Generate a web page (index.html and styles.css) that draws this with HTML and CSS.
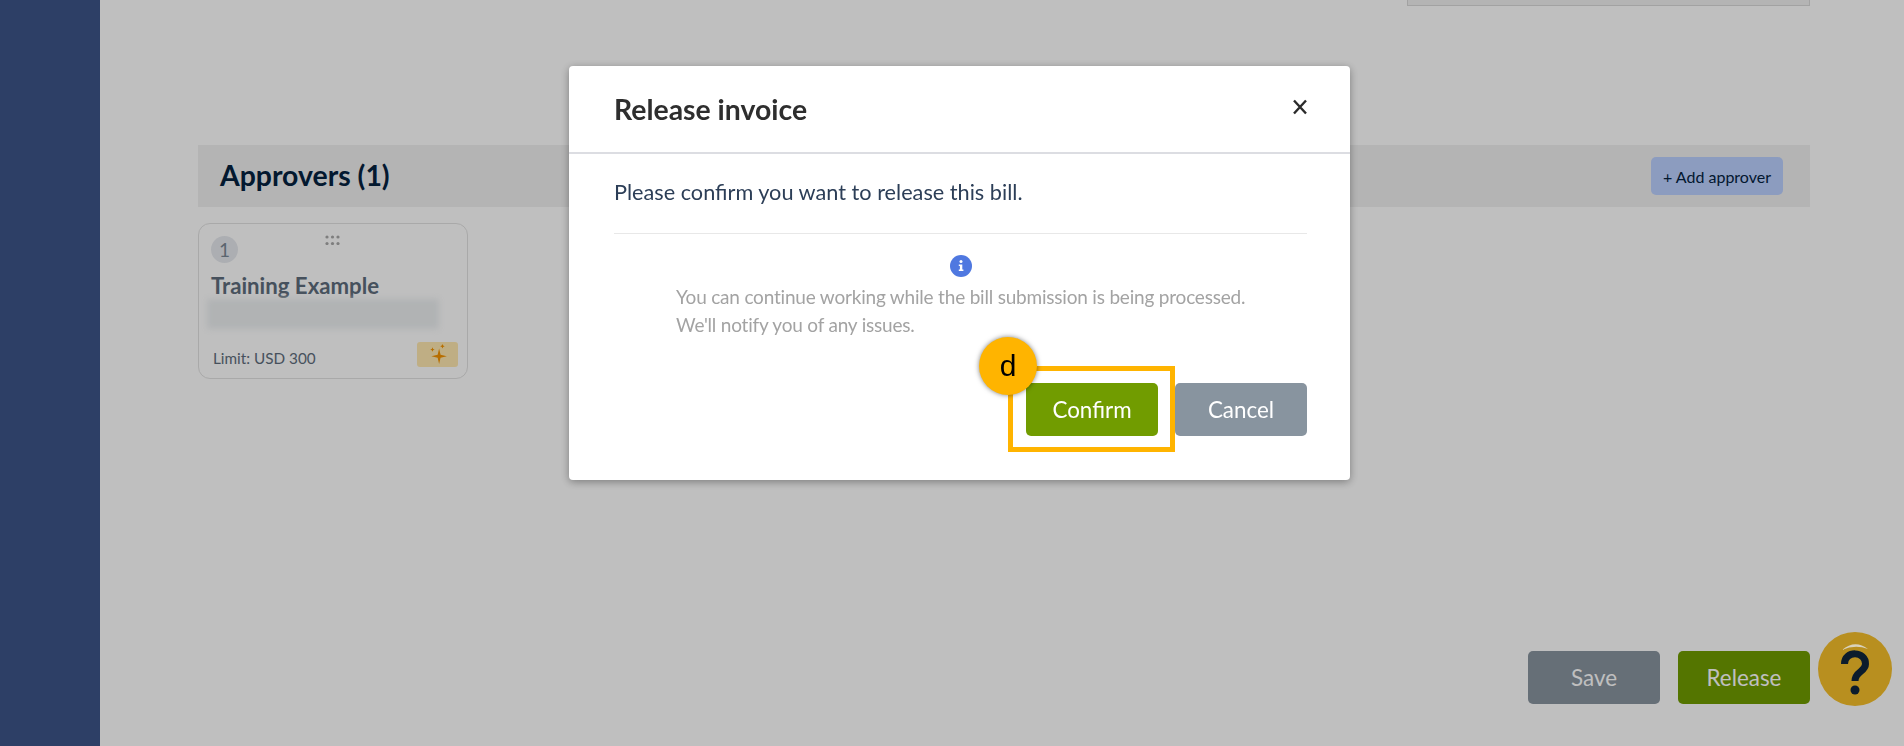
FILE: index.html
```html
<!DOCTYPE html>
<html lang="en">
<head>
  <meta charset="UTF-8">
  <title>Release invoice</title>
  <link rel="stylesheet" href="styles.css">
</head>
<body>
  <div class="page">
    <div class="sidebar"></div>
    <div class="main">
      <div class="top-box"></div>

      <div class="section-bar">
        <h2>Approvers (1)</h2>
        <button class="add-btn">+ Add approver</button>
      </div>

      <div class="card">
        <div class="card-top">
          <span class="step">1</span>
          <svg class="grip" width="15" height="10" viewBox="0 0 15 10">
            <g fill="#a9a9a9">
              <circle cx="2" cy="2" r="1.6"/><circle cx="7.500" cy="2" r="1.6"/><circle cx="13" cy="2" r="1.6"/>
              <circle cx="2" cy="8.500" r="1.6"/><circle cx="7.500" cy="8.500" r="1.6"/><circle cx="13" cy="8.500" r="1.6"/>
            </g>
          </svg>
        </div>
        <div class="card-name">Training Example</div>
        <div class="card-blur"></div>
        <div class="card-foot">
          <span class="limit">Limit: USD 300</span>
          <span class="badge">
            <svg width="20" height="20" viewBox="0 0 18 18">
              <g fill="#f59300">
                <path d="M10 4 L11.300 9.700 L17 11 L11.300 12.300 L10 18 L8.700 12.300 L3 11 L8.700 9.700Z"/>
                <path d="M4 3 L4.600 4.400 L6 5 L4.600 5.600 L4 7 L3.400 5.600 L2 5 L3.400 4.400Z"/>
                <path d="M13 0 L13.600 1.400 L15 2 L13.600 2.600 L13 4 L12.400 2.600 L11 2 L12.400 1.400Z"/>
              </g>
            </svg>
          </span>
        </div>
      </div>

      <div class="footer">
        <button class="btn btn-grey">Save</button>
        <button class="btn btn-green">Release</button>
      </div>
    </div>
  </div>

  <div class="backdrop"></div>

  <div class="modal">
    <div class="modal-head">
      <h3>Release invoice</h3>
      <svg class="close" width="16" height="16" viewBox="0 0 16 16">
        <path d="M2 1.500 L14 14.500 M14 1.500 L2 14.500" stroke="#2b2b2b" stroke-width="2.400" fill="none"/>
      </svg>
    </div>
    <div class="modal-body">
      <p class="confirm-text">Please confirm you want to release this bill.</p>
      <div class="notice">
        <span class="info-icon">
          <svg width="22" height="22" viewBox="0 0 22 22">
            <circle cx="11" cy="11" r="11" fill="#4f78e0"/>
            <circle cx="11" cy="6.500" r="1.500" fill="#fff"/>
            <path d="M8.800 9.500 H12.300 V14.500 H13.400 V16 H8.800 V14.500 H9.900 V11 H8.800Z" fill="#fff"/>
          </svg>
        </span>
        <p>You can continue working while the bill submission is being processed.<br>We'll notify you of any issues.</p>
      </div>
      <div class="modal-actions">
        <button class="btn btn-green">Confirm</button>
        <button class="btn btn-grey">Cancel</button>
      </div>
    </div>
  </div>

  <div class="callout-box"></div>
  <div class="callout-dot">d</div>

  <div class="help">
    <svg width="74" height="74" viewBox="0 0 74 74">
      <circle cx="37" cy="37" r="37" fill="#b88f1f"/>
      <path d="M24 18 Q37 7 50 17 Q37 12 24 18Z" fill="#d9d2bd"/>
      <path d="M26.500 32 C26.500 18 48 19 47.500 32 C47.500 40 37 39 37 49" fill="none" stroke="#0b1c2c" stroke-width="7"/>
      <circle cx="37" cy="58" r="4.500" fill="#0b1c2c"/>
    </svg>
  </div>
</body>
</html>
```

FILE: styles.css
```css
* {
  box-sizing: border-box;
}
html, body {
  margin: 0;
  height: 100%;
  overflow: hidden;
}
body {
  font-family: Lato, "Open Sans", sans-serif;
  background-color: #fff;
  color: #2f3b4a;
}
button {
  font-family: inherit;
  border: none;
}

.page {
  display: flex;
  height: 746px;
}
.sidebar {
  width: 100px;
  background-color: #3d5588;
}
.main {
  flex: 1;
  display: flex;
  flex-direction: column;
  padding: 0 94px 42px 98px;
}
.top-box {
  height: 6px;
  margin-left: 1209px;
  background-color: #f0f0f0;
  border: 1px solid #d8d8d8;
  border-top: none;
}

.section-bar {
  margin-top: 139px;
  height: 62px;
  display: flex;
  align-items: center;
  justify-content: space-between;
  padding: 0 27px 2px 22px;
  background-color: #f1f1f1;
}
.section-bar h2 {
  margin: 0;
  font-size: 28.400px;
  font-weight: 700;
  color: #04223f;
}
.add-btn {
  width: 132px;
  height: 38px;
  margin-top: 2px;
  background-color: #bbd0ff;
  border-radius: 5px;
  font-size: 16px;
  color: #04223f;
}

.card {
  margin-top: 16px;
  width: 270px;
  height: 156px;
  border: 1px solid #e2e2e2;
  border-radius: 12px;
  padding: 12px 9px 0 12px;
}
.card-top {
  display: flex;
  align-items: flex-start;
}
.step {
  width: 27px;
  height: 27px;
  border-radius: 50%;
  background-color: #e6e9ee;
  color: #7a8794;
  font-size: 19px;
  display: flex;
  align-items: center;
  justify-content: center;
}
.grip {
  margin: -1px 0 0 87px;
}
.card-name {
  margin-top: 9px;
  font-size: 22.200px;
  font-weight: 700;
  line-height: 27px;
  color: #5e6d7c;
}
.card-blur {
  margin: 0 19px 0 -4px;
  height: 30px;
  background-color: #eceff1;
  filter: blur(3px);
}
.card-foot {
  margin-top: 12px;
  display: flex;
  align-items: center;
  justify-content: space-between;
}
.limit {
  padding: 8px 0 0 2px;
  font-size: 15.300px;
  color: #5e6d7c;
}
.badge {
  width: 41px;
  height: 25px;
  background-color: #ffe9b0;
  border-radius: 3px;
  display: flex;
  align-items: center;
  justify-content: center;
}

.footer {
  margin-top: auto;
  display: flex;
  justify-content: flex-end;
  gap: 18px;
}
.btn {
  width: 132px;
  height: 53px;
  border-radius: 5px;
  color: #fff;
  font-size: 22.400px;
}
.btn-green {
  background-color: #719c00;
}
.btn-grey {
  background-color: #88949f;
}

.backdrop {
  position: fixed;
  inset: 0;
  background-color: rgba(0, 0, 0, 0.25);
}

.modal {
  position: fixed;
  left: 569px;
  top: 66px;
  width: 781px;
  height: 414px;
  background-color: #fff;
  border-radius: 4px;
  box-shadow: 0 2px 8px rgba(0, 0, 0, 0.35);
}
.modal-head {
  height: 88px;
  display: flex;
  align-items: center;
  justify-content: space-between;
  padding: 0 42px 0 45px;
  border-bottom: 2px solid #dcdde2;
}
.modal-head h3 {
  margin: 0;
  font-size: 28.400px;
  font-weight: 700;
  color: #2e2e2e;
}
.close {
  margin-bottom: 4px;
}
.modal-body {
  padding: 0 43px 0 45px;
}
.confirm-text {
  margin: 0;
  height: 80px;
  padding-top: 23px;
  font-size: 21.700px;
  line-height: 30px;
  color: #2c3e57;
  border-bottom: 1px solid #e8e8e8;
}
.notice {
  margin-top: 21px;
  text-align: center;
}
.info-icon {
  display: block;
  height: 22px;
}
.notice p {
  margin: 6px 0 0 62px;
  font-size: 19px;
  letter-spacing: -0.2px;
  line-height: 28px;
  text-align: left;
  color: #a3a3a3;
}
.modal-actions {
  margin-top: 44px;
  display: flex;
  justify-content: flex-end;
  gap: 17px;
}

.callout-box {
  position: fixed;
  left: 1008px;
  top: 366px;
  width: 167px;
  height: 86px;
  border: 5px solid #ffb400;
}
.callout-dot {
  position: fixed;
  left: 979px;
  top: 337px;
  width: 58px;
  height: 58px;
  border-radius: 50%;
  background-color: #ffb400;
  box-shadow: 0 0 5px rgba(0, 0, 0, 0.5);
  font-family: "Liberation Sans", Arial, sans-serif;
  font-size: 30px;
  color: #000;
  display: flex;
  align-items: center;
  justify-content: center;
}
.help {
  position: fixed;
  left: 1818px;
  top: 632px;
  width: 74px;
  height: 74px;
}
```
